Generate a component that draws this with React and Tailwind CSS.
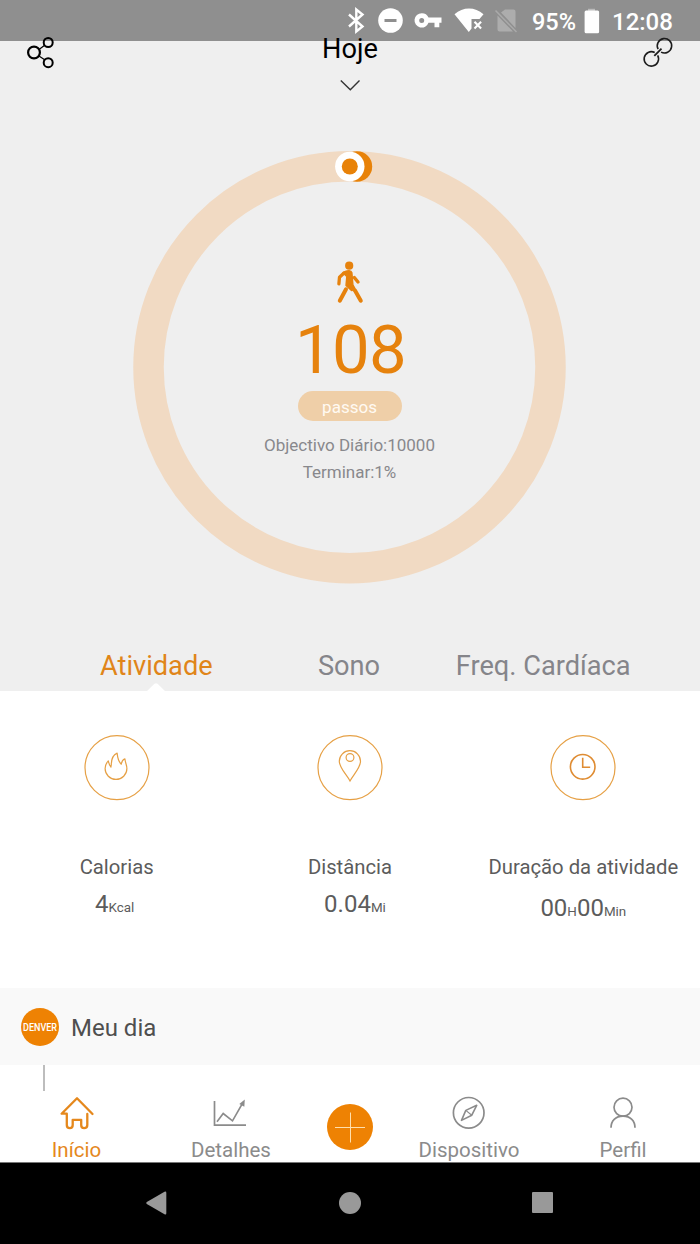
import React from "react";

function StatusBar() {
  return (
    <div className="flex h-[41px] shrink-0 items-center bg-[#8f8f8f] pl-[347px] text-white">
      <svg className="h-[41px] w-[180px] shrink-0" viewBox="347 0 180 41" fill="none">
        <path d="M349 14.5 362.5 26.5 356.3 31.500V9.500l6.200 5L349 26.500" stroke="#fff" strokeWidth="2.400" />
        <circle cx="390.500" cy="20.500" r="12.300" fill="#fff" />
        <path d="M384.500 20.500h12" stroke="#8f8f8f" strokeWidth="3" />
        <path d="M421.700 13.200a7.200 7.200 0 1 0 6.800 9.600h6v4.400h4.800v-4.400h2.200v-5.200h-13a7.200 7.200 0 0 0-6.800-4.400zm0 4.700a2.500 2.500 0 1 1 0 5 2.500 2.500 0 0 1 0-5z" fill="#fff" fillRule="evenodd" />
        <path d="M454.500 14.300C463 6.500 475 6.500 483.500 14.300L479.500 19H471.500V28.500L468.800 32Z" fill="#fff" />
        <path d="m474.500 21.800 6.600 6.800m0-6.800-6.600 6.800" stroke="#fff" strokeWidth="2.100" />
        <path d="M505 9.500h8.500q2 0 2 2V28L501 12.500ZM497.500 15.500l15.500 16h-13.500q-2 0-2-2Z" fill="#adadad" />
        <path d="m495.500 10.500 21 21.500" stroke="#aaa" strokeWidth="1.500" />
      </svg>
      <div className="ml-[5px] w-[46px] pt-[2px] text-[23.5px] font-medium leading-[28px]">95%</div>
      <svg className="ml-[6px] h-[26px] w-[16px]" viewBox="0 0 16 26">
        <path d="M4 3V.8h7V3z" fill="#bbb" />
        <rect x=".6" y="2.500" width="14.500" height="22.800" rx="1.500" fill="#fff" />
      </svg>
      <div className="ml-[12px] pt-[2px] text-[24px] font-medium leading-[28px]">12:08</div>
    </div>
  );
}

function Header() {
  return (
    <div className="relative -mt-[8px] flex h-[67px] justify-between">
      <svg className="ml-[24px] h-[42px] w-[36px]" viewBox="24 33 36 42" fill="none" stroke="#000">
        <path d="m39 49.500 6-4.500M39 56l6 4" strokeWidth="1.200" />
        <circle cx="34" cy="52.500" r="5.900" strokeWidth="2.200" />
        <circle cx="48.200" cy="42.500" r="4.500" strokeWidth="2" />
        <circle cx="48.200" cy="62.700" r="4.500" strokeWidth="2" />
      </svg>
      <div className="flex flex-col items-center text-[27.2px] leading-[32px] text-black">
        Hoje
        <svg className="mt-[13px] h-[14px] w-[24px]" viewBox="0 0 24 14" fill="none">
          <path d="m2.800 2.500 9.500 9.200 9.200-9.200" stroke="#333" strokeWidth="1.400" />
        </svg>
      </div>
      <svg className="mr-[24px] h-[42px] w-[36px]" viewBox="640 33 36 42" fill="none" stroke="#1c1c1c" strokeWidth="1.600">
        <g transform="rotate(-45 657.900 52.300)">
          <path d="M655.500 50.200a7.200 7.200 0 1 0 0 4.200M660.300 50.200a7.200 7.200 0 1 1 0 4.200" />
          <path d="M652.800 52.300h10.200" strokeWidth="1.800" />
        </g>
      </svg>
    </div>
  );
}

function StepRing() {
  return (
    <div className="ml-[-1px] mt-[41px] grid justify-items-center">
      <svg className="col-start-1 row-start-1 h-[444px] w-[444px]" viewBox="127.500 141 444 444" fill="none">
        <circle cx="349" cy="367.300" r="201" stroke="#f1dac3" strokeWidth="30.500" />
        <circle cx="356.500" cy="166.500" r="15.200" fill="#e88208" />
        <circle cx="349.300" cy="166.500" r="14.700" fill="#fff" />
        <circle cx="349.300" cy="166.500" r="8" fill="#e88208" />
      </svg>
      <div className="col-start-1 row-start-1 flex flex-col items-center pt-[118px]">
        <svg className="h-[46px] w-[34px]" viewBox="332.500 259 34 46" fill="none" stroke="#e6820d" strokeLinecap="round" strokeLinejoin="round">
          <circle cx="348.700" cy="265.700" r="4.100" fill="#e6820d" stroke="none" />
          <path d="m343.500 273-4.500 4.200-.6 6.600" strokeWidth="3.300" />
          <path d="M342.500 272.700q3-2 6-2.100 2.300.2 2.900 2.200l1 12 1.800 3.200-3.200 2.500-5.500-5 .8-9z" fill="#e6820d" strokeWidth="1.400" />
          <path d="m353.800 277.500 3.700 4.500" strokeWidth="3.400" />
          <path d="m345.500 289.300-6.200 11.400M350 286.500l4.500 4 5.800 10.200" strokeWidth="4" />
        </svg>
        <div className="mt-[6px] pl-[2px] text-[67px] leading-[78px] tracking-[-0.7px] text-[#e6820d]">108</div>
        <div className="mt-[2px] h-[30px] w-[104px] rounded-full bg-[#efcfa8] text-center text-[17px] leading-[32px] text-[#fffaf2]">passos</div>
        <div className="mt-[11px] text-center text-[17px] leading-[26.6px] text-[#88888c]">
          <div>Objectivo Diário:10000</div>
          <div>Terminar:1%</div>
        </div>
      </div>
    </div>
  );
}

function Tabs() {
  return (
    <div className="mx-auto mt-auto grid h-[45px] w-[581px] grid-cols-3 text-center text-[27.2px] leading-[40px] text-[#85858a]">
      <div className="flex flex-col items-center text-[#e08519]">
        <span className="h-[37px]">Atividade</span>
        <svg className="h-[8px] w-[18px]" viewBox="0 0 18 8">
          <path d="M0 8 7.500.8Q9-.3 10.500.8L18 8z" fill="#fff" />
        </svg>
      </div>
      <div className="-ml-[2px]">Sono</div>
      <div className="-ml-[1px] whitespace-nowrap">Freq. Cardíaca</div>
    </div>
  );
}

function Metric({ label, icon, children, drop }) {
  return (
    <div className="flex flex-col items-center text-[#5c5c5c]">
      <svg className="h-[66px] w-[66px]" viewBox="0 0 66 66" fill="none" stroke="#e6a045" strokeWidth="1.200">
        <circle cx="33" cy="32.700" r="32" />
        {icon}
      </svg>
      <div className="mt-[53px] whitespace-nowrap text-[20.3px] leading-[26px]">{label}</div>
      <div className={drop ? "mt-[14px] text-[24px] leading-[28px]" : "mt-[10px] text-[24px] leading-[28px]"}>{children}</div>
    </div>
  );
}

function Unit({ children }) {
  return <span className="text-[13.4px]">{children}</span>;
}

function Metrics() {
  return (
    <div className="grid h-[297px] shrink-0 grid-cols-3 bg-white pt-[44px]">
      <Metric
        label="Calorias"
        icon={<path d="M33.600 18.600c-3.400 1.500-5.800 5.500-5.800 11.500l-.4 2.500c-1-1-2-3.500-2.600-6.300-2 2.200-3.200 4.800-3.200 7.700a10.900 10.900 0 0 0 21.800 0c0-3.500-1.600-5.500-2-9.700-2 .8-3.200 2.600-3.600 5.400-2.800-2.500-3.700-6.500-4.200-11.100z" transform="translate(-.5 -.5)" strokeLinejoin="round" />}
      >
        <span className="pr-[4px]">4<Unit>Kcal</Unit></span>
      </Metric>
      <Metric
        label="Distância"
        icon={
          <>
            <path d="M33 46C30 40 22.300 33 22.300 26.300a10.600 10.600 0 0 1 21.200 0C43.500 33 36 40 33 46z" />
            <circle cx="33" cy="22.500" r="3.900" />
          </>
        }
      >
        <span className="pl-[10px]">0.04<Unit>Mi</Unit></span>
      </Metric>
      <Metric
        drop
        label="Duração da atividade"
        icon={
          <g stroke="#df8c32" strokeWidth="1.600">
            <circle cx="32.700" cy="31.800" r="12.300" />
            <path d="M32.700 22.800v9.400h7.500" />
          </g>
        }
      >
        00<Unit>H</Unit>00<Unit>Min</Unit>
      </Metric>
    </div>
  );
}

function MyDay() {
  return (
    <>
      <div className="flex h-[77px] shrink-0 items-center bg-[#f9f9f9] pl-[21px]">
        <div className="flex h-[38px] w-[38px] items-center justify-center rounded-full bg-[#ee8203] text-white">
          <svg className="h-[20px] w-[38px] overflow-visible" viewBox="0 0 38 20">
            <text x="2" y="13.700" textLength="34" lengthAdjust="spacingAndGlyphs" fill="#fff" fontFamily="Roboto, sans-serif" fontSize="10.500" fontWeight="500">DENVER</text>
          </svg>
        </div>
        <div className="ml-[12px] pt-[2px] text-[24px] leading-[30px] text-[#4f4f4f]">Meu dia</div>
      </div>
      <div className="h-[26px] shrink-0 bg-white pl-[43px]">
        <div className="h-full w-[2px] bg-[#bdbdbd]" />
      </div>
    </>
  );
}

function NavItem({ label, active, children }) {
  return (
    <div className={active ? "flex flex-col items-center text-[#e5881c]" : "flex flex-col items-center text-[#8b8b8b]"}>
      <svg className="mt-[4px] h-[36px] w-[40px]" viewBox="0 0 40 36" fill="none" stroke="currentColor">
        {children}
      </svg>
      <div className="mt-[7px] text-[20.5px] leading-[24px]">{label}</div>
    </div>
  );
}

function BottomNav() {
  return (
    <div className="grid h-[72px] shrink-0 grid-cols-[153px_156px_81px_158px_150px] border-b border-[#777] bg-white">
      <NavItem label="Início" active>
        <path d="M35.500 19 20 3.200 4.600 18.700h5.200V30q0 3.200 3 3.200 2.900 0 2.900-3.200v-5.200h8.500v5.200q0 3.200 2.900 3.200 3.200 0 3.200-3.200V19" strokeWidth="2.300" strokeLinejoin="round" strokeLinecap="round" />
      </NavItem>
      <NavItem label="Detalhes">
        <path d="M3.500 6v24.200h31.500" strokeWidth="1.700" />
        <path d="m6 26.800 6.200-8.300 9.300 7.300L31.700 8" strokeWidth="1.600" />
        <path d="m33.800 4.500-5.500 4.400 5 2.900z" fill="currentColor" stroke="none" />
      </NavItem>
      <div className="flex justify-center pt-[13px]">
        <svg className="h-[46px] w-[46px]" viewBox="0 0 46 46">
          <circle cx="23" cy="23" r="23" fill="#ee8203" />
          <path d="M8 23.500h30M23.500 8.500v30" stroke="#ffdfac" strokeWidth="1" />
        </svg>
      </div>
      <NavItem label="Dispositivo">
        <circle cx="19.700" cy="17.800" r="15.300" strokeWidth="1.700" />
        <path d="M27.700 10.300 22.800 20.200l-10.300 5.200 4.300-10z" strokeWidth="1.600" strokeLinejoin="round" />
        <path d="m16.800 15.400 6 4.800" strokeWidth="1.200" />
      </NavItem>
      <NavItem label="Perfil">
        <circle cx="20" cy="12.200" r="9" strokeWidth="1.700" />
        <path d="M8 32.800C8 26 12.500 21.200 20 21.200S32 26 32 32.800" strokeWidth="1.700" />
      </NavItem>
    </div>
  );
}

function SystemNav() {
  return (
    <div className="flex flex-1 items-center bg-black pb-[2px] pl-[145px]">
      <svg className="h-[24px] w-[22px]" viewBox="0 0 22 24">
        <path d="M19.500.8q1.800-.8 1.800 1V22.200q0 1.800-1.800 1L1.800 13q-1.300-1 0-2z" fill="#999" />
      </svg>
      <div className="ml-[171.500px] h-[22px] w-[22px] rounded-full bg-[#999]" />
      <div className="ml-[171px] h-[21px] w-[21px] rounded-[1px] bg-[#999]" />
    </div>
  );
}

export default function App() {
  return (
    <div className="flex h-[1244px] w-[700px] flex-col overflow-hidden bg-white font-['Roboto',sans-serif]">
      <StatusBar />
      <div className="flex h-[650px] shrink-0 flex-col bg-[#efefef]">
        <Header />
        <StepRing />
        <Tabs />
      </div>
      <Metrics />
      <MyDay />
      <BottomNav />
      <SystemNav />
    </div>
  );
}
